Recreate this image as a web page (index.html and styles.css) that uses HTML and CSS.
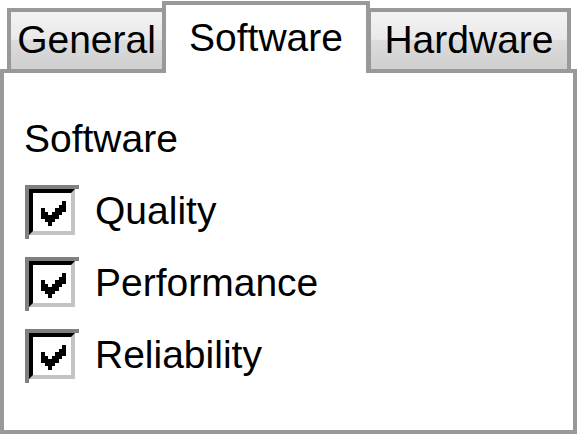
FILE: index.html
```html
<!DOCTYPE html>
<html>
<head>
<meta charset="utf-8">
<link rel="stylesheet" href="styles.css">
</head>
<body>
<div class="tabs">
  <div class="strip">
    <div class="tab tab-general">General</div>
    <div class="tab tab-software active">Software</div>
    <div class="tab tab-hardware">Hardware</div>
  </div>
  <div class="panel">
    <div class="group-label">Software</div>
    <ul class="options">
      <li class="option">
        <span class="cb"><span class="cb-inner"><svg class="check" viewBox="0 0 7 7" width="25" height="25" shape-rendering="crispEdges"><path d="M6 0h1v1h-1z M5 1h2v1h-2z M0 2h1v1h-1z M4 2h3v1h-3z M0 3h2v1h-2z M3 3h3v1h-3z M0 4h5v1h-5z M1 5h3v1h-3z M2 6h1v1h-1z" fill="#000"/></svg></span></span>
        <span class="label">Quality</span>
      </li>
      <li class="option">
        <span class="cb"><span class="cb-inner"><svg class="check" viewBox="0 0 7 7" width="25" height="25" shape-rendering="crispEdges"><path d="M6 0h1v1h-1z M5 1h2v1h-2z M0 2h1v1h-1z M4 2h3v1h-3z M0 3h2v1h-2z M3 3h3v1h-3z M0 4h5v1h-5z M1 5h3v1h-3z M2 6h1v1h-1z" fill="#000"/></svg></span></span>
        <span class="label">Performance</span>
      </li>
      <li class="option">
        <span class="cb"><span class="cb-inner"><svg class="check" viewBox="0 0 7 7" width="25" height="25" shape-rendering="crispEdges"><path d="M6 0h1v1h-1z M5 1h2v1h-2z M0 2h1v1h-1z M4 2h3v1h-3z M0 3h2v1h-2z M3 3h3v1h-3z M0 4h5v1h-5z M1 5h3v1h-3z M2 6h1v1h-1z" fill="#000"/></svg></span></span>
        <span class="label">Reliability</span>
      </li>
    </ul>
  </div>
</div>
</body>
</html>
```

FILE: styles.css
```css
html, body {
  margin: 0;
  padding: 0;
  background: #ffffff;
}

body {
  font-family: "Liberation Sans", Arial, sans-serif;
  font-size: 39px;
  color: #000000;
}

.tabs {
  width: 577px;
  height: 434px;
  display: flex;
  flex-direction: column;
}

.strip {
  height: 69px;
  display: flex;
  align-items: flex-end;
  padding-left: 7px;
  box-sizing: border-box;
}

.tab {
  box-sizing: border-box;
  height: 61px;
  border: 4px solid #999999;
  border-bottom: none;
  padding-top: 8px;
  line-height: 40px;
  text-align: center;
  white-space: nowrap;
  background: linear-gradient(#f3f3f3 0%, #e9e9e9 48%, #dcdcdc 49%, #cfcfcf 100%);
}

.tab-general {
  width: 159px;
}

.tab-software {
  width: 208px;
  margin-left: -4px;
}

.tab-hardware {
  width: 204px;
  margin-left: -3px;
}

.tab.active {
  height: 72px;
  padding-top: 13px;
  background: #ffffff;
  margin-bottom: -4px;
  position: relative;
  z-index: 1;
}

.panel {
  flex: 1;
  border: 4px solid #999999;
  background: #ffffff;
  padding: 46px 0 0 21px;
}

.group-label {
  line-height: 40px;
  height: 40px;
  margin-left: -1px;
}

.options {
  list-style: none;
  margin: 26px 0 0 0;
  padding: 0;
  display: flex;
  flex-direction: column;
  gap: 18px;
}

.option {
  display: flex;
  align-items: center;
  gap: 16px;
  height: 54px;
}

.cb {
  box-sizing: border-box;
  width: 54px;
  height: 54px;
  border-top: 4px solid #808080;
  border-left: 4px solid #808080;
  padding: 0 4px 4px 0;
  background: #ffffff;
  flex: none;
}

.cb-inner {
  display: block;
  box-sizing: border-box;
  width: 46px;
  height: 46px;
  border: 4px solid #c4c4c4;
  border-top-color: #000000;
  border-left-color: #000000;
  background: #ffffff;
  padding: 8px 0 0 8px;
}

.check {
  display: block;
}

.label {
  line-height: 40px;
  margin-top: -2px;
}
```
